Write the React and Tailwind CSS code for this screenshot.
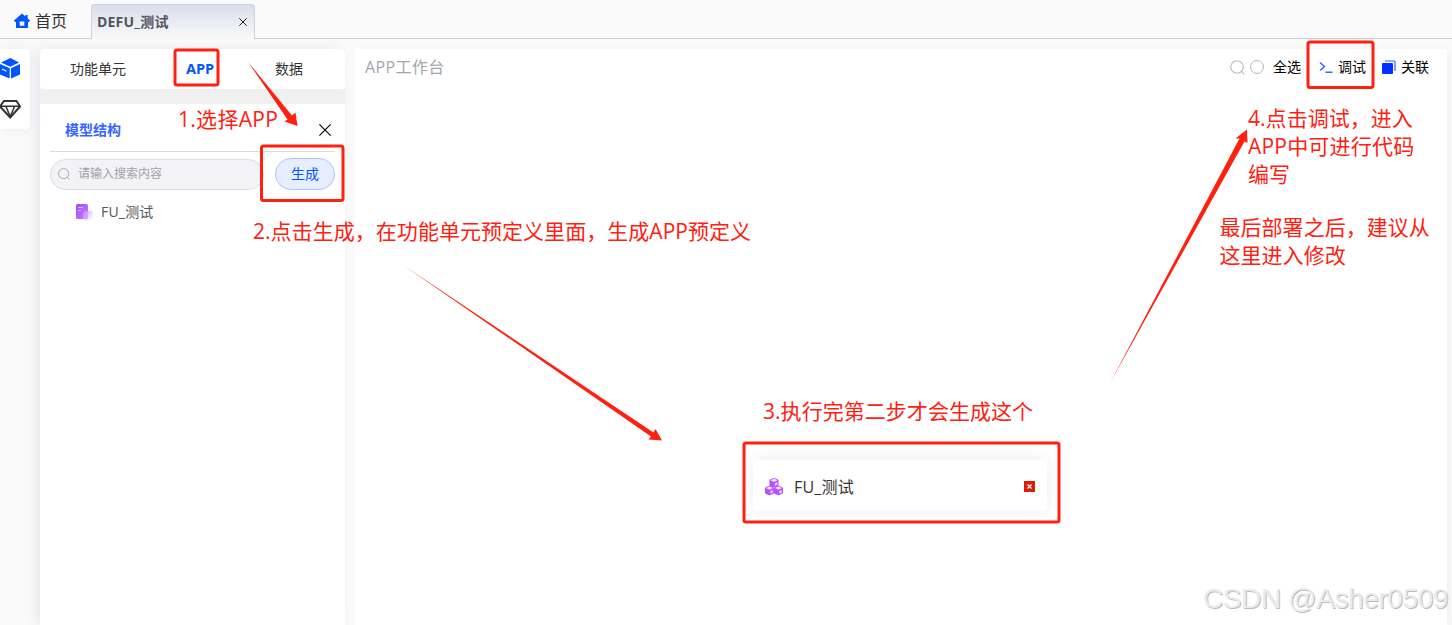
const TOOLBAR = "flex items-center text-sm leading-5 text-black";

export default function App() {
  return (
    <div className="relative flex h-[625px] w-[1452px] flex-col overflow-hidden bg-[#fafafa] font-['Open_Sans','Noto_Sans_CJK_SC',sans-serif] text-[#333]">
      <TopTabs />
      <div className="flex min-h-0 flex-1 pt-2.5">
        <Rail />
        <Sidebar />
        <Workspace />
      </div>
      <Annotations />
      <div className="absolute left-[1203px] top-[581px] whitespace-nowrap font-['Liberation_Sans',sans-serif] text-[28px] leading-9 tracking-[-0.4px] text-[#ebebeb] [text-shadow:1px_1px_0_#bcbcbc]">
        CSDN @Asher0509
      </div>
    </div>
  );
}

function TopTabs() {
  return (
    <header className="flex h-[39px] shrink-0 items-end border-b border-[#cecfd1]">
      <div className="flex h-[35px] w-[91px] items-center gap-[5px] pl-3.5">
        <HomeIcon />
        <span className="text-base leading-6">首页</span>
      </div>
      <div className="-mb-px flex h-[35px] w-[164px] items-center justify-between rounded-t border border-b-0 border-[#d0d3dc] bg-linear-to-b from-[#dadeea] to-[#fafafa] pl-[5px] pr-[7px]">
        <span className="text-sm font-bold leading-5 tracking-[0.2px] text-[#51555e]">DEFU_测试</span>
        <CloseIcon className="h-2 w-2 stroke-1 text-[#222]" />
      </div>
    </header>
  );
}

function Rail() {
  return (
    <nav className="flex h-20 w-[30px] shrink-0 flex-col justify-between rounded-r bg-white pb-[9px] pt-[9px] shadow-[0_0_12px_rgba(60,70,130,0.08)]">
      <BoxIcon />
      <DiamondIcon />
    </nav>
  );
}

function Sidebar() {
  return (
    <aside className="ml-2.5 flex w-[305px] shrink-0 flex-col bg-[#f0f0f0] shadow-[-4px_0_12px_-2px_rgba(60,70,130,0.13)]">
      <div className="flex h-10 shrink-0 items-center rounded bg-white text-sm leading-5">
        <span className="ml-[30px]">功能单元</span>
        <span className="ml-[60px] w-[30px] text-[14.5px] font-bold text-[#0055ff]">APP</span>
        <span className="ml-[59px]">数据</span>
      </div>
      <div className="mt-[15px] flex-1 bg-white px-2.5">
        <div className="flex h-12 items-center justify-between border-b border-[#dcdcdc] pl-[15px] pr-1 pt-1">
          <span className="text-sm font-bold leading-5 text-[#3366ff]">模型结构</span>
          <CloseIcon className="h-3 w-3 stroke-[1.1] text-black" />
        </div>
        <div className="flex h-[44px] items-center justify-between">
          <div className="flex h-[31px] w-[214px] items-center gap-[8px] rounded-full border border-[#dcdce6] bg-[#f2f2f7] pl-[7px] text-xs text-[#a0a2a8]">
            <SearchIcon className="h-3 w-3" />
            <span>请输入搜索内容</span>
          </div>
          <button className="h-8 w-[60px] rounded-full border border-[#adc5ff] bg-[#e6eeff] text-sm leading-5 text-[#0055ff]">
            生成
          </button>
        </div>
        <div className="flex items-center gap-[7px] pl-[25px] pt-[6px]">
          <FileIcon />
          <span className="text-sm leading-5 tracking-[0.2px] text-[#555]">FU_测试</span>
        </div>
      </div>
    </aside>
  );
}

function Workspace() {
  return (
    <main className="ml-2.5 flex w-[1092px] shrink-0 flex-col bg-white shadow-[4px_0_10px_-2px_rgba(60,70,130,0.06)]">
      <div className="flex h-9 items-center justify-between pl-2.5 pr-[18px]">
        <span className="text-base leading-6 tracking-[0.4px] text-[#a3a6ad]">APP工作台</span>
        <div className={TOOLBAR}>
          <SearchIcon className="h-[15px] w-[15px] text-[#b7b9bf]" />
          <span className="ml-[5px] h-3.5 w-3.5 rounded-full border border-[#b7b9bf]" />
          <span className="ml-[9px]">全选</span>
          <PromptIcon />
          <span className="ml-[5px]">调试</span>
          <LinkIcon />
          <span className="ml-[5px]">关联</span>
        </div>
      </div>
      <div className="ml-[398px] mt-[375px] flex h-[50px] w-[294px] items-center rounded-sm bg-white pl-3 pr-3 pt-[3px] shadow-[0_0_18px_rgba(0,0,0,0.08)]">
        <CubesIcon />
        <span className="ml-[11px] flex-1 text-base leading-6 tracking-[0.2px]">FU_测试</span>
        <svg className="h-[11px] w-[11px]" viewBox="0 0 11 11">
          <path d="M0 0h11v11H0z" fill="#d81e06" />
          <path d="m3.5 3.5 4 4m0-4-4 4" stroke="#fff" strokeWidth="1.2" />
        </svg>
      </div>
    </main>
  );
}

function Annotations() {
  return (
    <div className="pointer-events-none absolute inset-0 whitespace-nowrap text-[21px] leading-7 tracking-[0.04px] text-[#ff2010]">
      <svg className="absolute inset-0 h-full w-full" viewBox="0 0 1452 625">
        <g fill="none" stroke="#ff2010" strokeWidth="3">
          <rect x="175" y="50" width="43" height="35" rx="2" />
          <rect x="261.5" y="146" width="81.5" height="54.5" rx="2" />
          <rect x="744" y="443" width="315" height="79" rx="2" />
          <rect x="1308" y="42" width="65" height="45.5" rx="2" />
        </g>
        <g fill="#ff2010">
          <path d="M248 62 292 115.500 295.500 112.500 297.500 126 284.500 121.500 287.500 119.500Z" />
          <path d="M403 265 653.500 432.500 655.500 429 662 440.500 648.500 439.500 651 436.500Z" />
          <path d="M1110 383 1239.500 138.500 1235.500 138.500 1247 129.500 1247.500 143 1244.500 141.500Z" />
        </g>
      </svg>
      <p className="absolute left-[178px] top-[105px] tracking-[0.3px]">1.选择APP</p>
      <p className="absolute left-[253px] top-[217px]">2.点击生成，在功能单元预定义里面，生成APP预定义</p>
      <p className="absolute left-[763px] top-[397px]">3.执行完第二步才会生成这个</p>
      <p className="absolute left-[1248px] top-[104px]">
        4.点击调试，进入
        <br />
        <span className="tracking-[0.2px]">APP中可进行代码</span>
        <br />
        编写
      </p>
      <p className="absolute left-[1219.5px] top-[213px]">
        最后部署之后，建议从
        <br />
        这里进入修改
      </p>
    </div>
  );
}

function HomeIcon() {
  return (
    <svg className="h-4 w-4" viewBox="0 0 16 16" fill="#0055ff">
      <path fillRule="evenodd" d="M8 .5 0 7.500 1 9H2v6h12V9h1l1-1.500L13.700 5.400V2h-2.200v1.500ZM5.700 8.500h4.600v4.200H5.700Z" />
    </svg>
  );
}

function BoxIcon() {
  return (
    <svg className="h-[21px] w-[21px]" viewBox="0 0 21 21" fill="#0055ff">
      <path d="M10.300 0 19 4.500 10.300 8.800 1 4.500Z" />
      <path fillRule="evenodd" d="m0 6 9.700 4.300v10.200L0 16.500Zm2 4.600v1.200l4.500 2v-1.200Z" />
      <path d="m20 6-9 4.300v10.200L20 16.500Z" />
    </svg>
  );
}

function DiamondIcon() {
  return (
    <svg className="h-[21px] w-[21px]" viewBox="0 0 21 21" fill="none" stroke="#333" strokeWidth="2">
      <path d="M4 2h12.500L20 7.500l-9.800 11L0 7.500Z" />
      <path d="M0 7.200h20M6 7.500l4.200 10 4.300-10" strokeWidth="1.500" />
    </svg>
  );
}

function CloseIcon({ className }) {
  return (
    <svg className={className} viewBox="0 0 12 12" fill="none" stroke="currentColor">
      <path d="m.4.4 11.200 11.200m0-11.200L.4 11.600" vectorEffect="non-scaling-stroke" />
    </svg>
  );
}

function SearchIcon({ className }) {
  return (
    <svg className={className} viewBox="0 0 15 15" fill="none" stroke="currentColor" strokeWidth="1.100">
      <circle cx="7" cy="7" r="6.300" />
      <path d="m11.200 11.200 3.100 3.100" />
    </svg>
  );
}

function FileIcon() {
  return (
    <svg className="h-[18px] w-[19px]" viewBox="0 0 19 18">
      <defs>
        <linearGradient id="file" x2="1" y2="1">
          <stop stopColor="#9b4dff" />
          <stop offset="1" stopColor="#c77dff" />
        </linearGradient>
        <linearGradient id="fade" x2="1" y2="1">
          <stop stopColor="#c78aff" />
          <stop offset="1" stopColor="#f8edff" stopOpacity=".2" />
        </linearGradient>
      </defs>
      <rect x="1" y="1" width="12" height="15" rx="1.500" fill="url(#file)" />
      <path d="M3 4.500h5M3 7.500h3" stroke="#d9b5ff" />
      <rect x="8" y="8" width="10" height="9.500" rx="2" fill="url(#fade)" />
    </svg>
  );
}

function PromptIcon() {
  return (
    <svg className="ml-[18px] h-3.5 w-3.5" viewBox="0 0 14 14" fill="none" stroke="#2f6bff" strokeWidth="1.500">
      <path d="m1 2.500 4.500 4L1 10.500M6.500 12.200h7" />
    </svg>
  );
}

function LinkIcon() {
  return (
    <svg className="ml-4 h-3.5 w-3.5" viewBox="0 0 14 14" fill="#002fff">
      <rect y="3" width="11" height="11" rx="1" />
      <path d="M3 1h9a1 1 0 0 1 1 1v9" fill="none" stroke="#2a5fff" strokeWidth="1.200" />
    </svg>
  );
}

function Cube({ x, y }) {
  return (
    <g transform={`translate(${x} ${y})`}>
      <path d="M4.500 0 8 1.200 9 2.500v4.700L8 8.300 4.500 9.500 1 8.300 0 7.200V2.500l1-1.300Z" fill="#b84cff" />
      <path d="M4.500.8 7.900 2.300 4.500 3.900 1.100 2.300Z" fill="#f6e8ff" />
      <path d="m5.300 5.300 2.600-1.200v2.600L5.300 7.900Z" fill="#ecd0ff" />
    </g>
  );
}

function CubesIcon() {
  return (
    <svg className="h-[18px] w-[18px]" viewBox="0 0 18 18">
      <Cube x={4.5} y={0} />
      <Cube x={0} y={7.8} />
      <Cube x={9} y={7.8} />
    </svg>
  );
}
